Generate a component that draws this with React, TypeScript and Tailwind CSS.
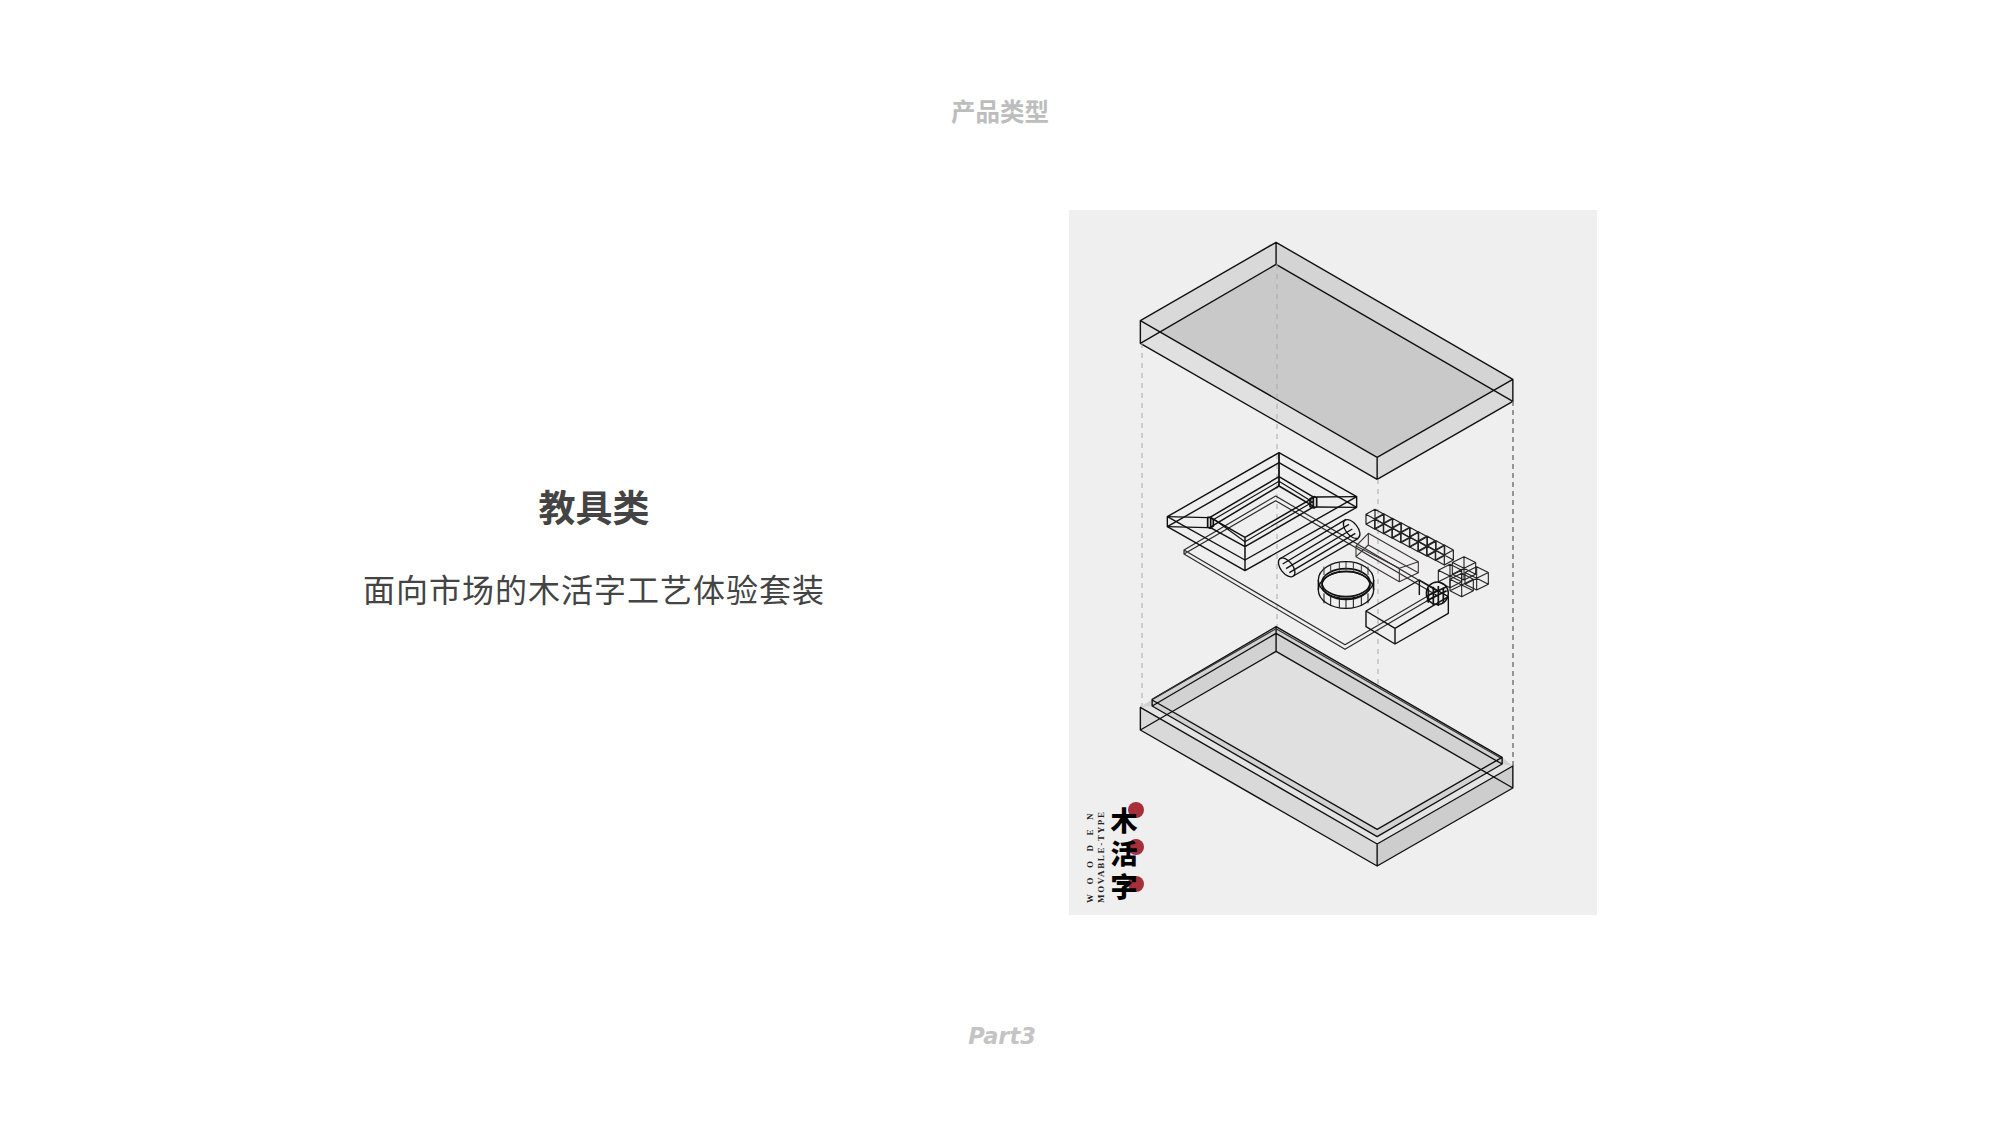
import React from 'react';

type Pt = [number, number];

const INK = '#111';

// open or closed wire line, stroke stays in screen pixels inside the scaled groups
const Wire = ({ d, w = 1.4, c = INK, dash }: { d: string; w?: number; c?: string; dash?: string }) => (
  <path d={d} fill="none" stroke={c} strokeWidth={w} strokeDasharray={dash} strokeLinejoin="round" vectorEffect="non-scaling-stroke" />
);

const Oval = ({ x, y, rx, ry, rot = 0, w = 1.3, c = INK }: { x: number; y: number; rx: number; ry: number; rot?: number; w?: number; c?: string }) => (
  <ellipse cx={x} cy={y} rx={rx} ry={ry} transform={`rotate(${rot} ${x} ${y})`} fill="none" stroke={c} strokeWidth={w} vectorEffect="non-scaling-stroke" />
);

// wire cube: hexagon outline with both the near and the far corner drawn
const Cube = ({ x, y, hw = 35, hh = 35, w = 1.1 }: { x: number; y: number; hw?: number; hh?: number; w?: number }) => {
  const q = hh / 2;
  return (
    <Wire
      w={w}
      c="#222"
      d={`M${x} ${y - hh} L${x + hw} ${y - q} L${x + hw} ${y + q} L${x} ${y + hh} L${x - hw} ${y + q} L${x - hw} ${y - q} Z
          M${x - hw} ${y - q} L${x} ${y} L${x + hw} ${y - q} M${x} ${y} L${x} ${y + hh}
          M${x - hw} ${y + q} L${x} ${y} L${x + hw} ${y + q} M${x} ${y} L${x} ${y - hh}`}
    />
  );
};

// row of little open cubes beside the tray, they overlap and form the dark zigzag
const CubeRow = () => {
  const cells = Array.from({ length: 9 }, (_, i) => i);
  return (
    <g>
      {cells.map((i) => (
        <Cube key={i} x={735 + i * 26} y={238 + i * 13.4} hw={27} hh={30} w={1.2} />
      ))}
    </g>
  );
};

const Ring = () => {
  const ticks: Pt[] = [
    [-66, 40], [-46, 48], [-20, 53], [0, 54], [22, 53], [46, 48], [66, 40],
  ];
  return (
    <g>
      <Oval x={648} y={420} rx={83} ry={55} w={1.3} />
      <Oval x={648} y={450} rx={83} ry={55} w={1.3} />
      <Oval x={648} y={428} rx={72} ry={42} w={1.6} />
      <Oval x={648} y={436} rx={72} ry={42} w={1.6} />
      <Wire d="M565 420 L565 450 M731 420 L731 450" />
      {ticks.map(([dx, dy], i) => (
        <Wire key={i} w={1} d={`M${648 + dx} ${420 + dy} L${648 + dx} ${450 + dy}`} />
      ))}
      {ticks.map(([dx, dy], i) => (
        <Wire key={i} w={1} d={`M${648 + dx} ${420 - dy} L${648 + dx} ${445 - dy}`} c="#333" />
      ))}
    </g>
  );
};

const Exploded = () => (
  <svg width={528} height={705} viewBox="0 0 528 705" className="block">
    {/* lid */}
    <g transform="translate(-9 -10) scale(0.35714 0.33333)">
      <path d="M605 127 L225 362 L225 430 L888 838 L1268 604 L1268 538 Z" fill="#e0e0e0" />
      <path d="M605 127 L1268 538 L1215 570 L605 193 Z" fill="#d4d4d4" />
      <path d="M605 127 L225 362 L280 397 L605 193 Z" fill="#d9d9d9" />
      <path d="M888 772 L888 838 L1268 604 L1268 538 Z" fill="#dadada" />
      <path d="M605 193 L280 397 L888 772 L1215 570 Z" fill="#c9c9c9" />
      <Wire d="M605 127 L225 362 L225 430 L888 838 L1268 604 L1268 538 Z M225 362 L888 772 L1268 538 M888 772 L888 838 M605 127 L605 193 M225 430 L605 193 L1268 604" />
    </g>

    {/* guide lines */}
    <Wire d="M73 133 L73 497" w={1} c="#aaa" dash="5 5" />
    <Wire d="M208 54 L208 417" w={1} c="#aaa" dash="5 5" />
    <Wire d="M309 269 L309 619" w={1} c="#aaa" dash="5 5" />
    <Wire d="M444 191 L444 556" w={1.3} c="#666" dash="5 4" />

    {/* tray with plate */}
    <g transform="translate(61 230) scale(0.33333)">
      <Wire d="M437 168 L162 330 L645 614 L920 452 Z M437 182 L162 342 L645 628 L920 466 Z M162 330 L162 342" w={1.2} c="#2a2a2a" />
      <Wire d="M447 38 L112 230 L112 260 L345 392 L680 202 L680 170 Z M112 230 L345 360 L680 170 M112 260 L447 68 L680 202 M345 360 L345 392" />
      <Wire d="M447 38 L447 138" w={1.8} />
      <Wire d="M447 110 L240 232 L345 292 L552 172 Z M240 262 L345 320 L552 200 L447 138 Z M345 292 L345 362" w={1.5} />
      <Wire d="M447 124 L252 238 L345 305 L548 186 Z" w={1.2} />
      <Wire d="M233 232 L233 262 L240 265 L250 258 L250 238 L240 232 Z M242 232 L242 264 M560 172 L560 200 L552 204 L540 200 L540 176 L552 170 Z M550 171 L550 203" w={1.7} />
      <Wire d="M112 230 L233 233 M112 260 L233 263 M560 171 L680 170 M560 201 L680 202" w={1.4} />

      {/* cylinder */}
      <Wire d="M449 357 L648 238 M490 408 L685 295 M458 372 L657 253 M468 386 L667 267 M478 398 L676 280" w={1.3} />
      <Oval x={470} y={382} rx={33} ry={18} rot={52} />
      <Oval x={665} y={267} rx={33} ry={18} rot={52} />
      <Ring />

      {/* prism */}
      <Wire d="M715 280 L865 365 L865 398 L808 425 L678 350 L678 318 Z M678 318 L808 385 L865 365 M808 385 L808 425 M715 280 L715 315 L865 398 M678 350 L715 315" w={1.1} c="#3c3636" />

      <CubeRow />
      <Cube x={960} y={408} />
      <Cube x={1002} y={385} />
      <Cube x={1040} y={415} />
      <Cube x={995} y={435} />

      {/* block with the round stamp */}
      <Wire d="M708 513 L868 420 L955 470 L795 565 Z M708 513 L708 560 L795 612 L955 520 L955 470 M795 565 L795 612 M868 420 L868 465" w={1.4} />
      <Oval x={922} y={460} rx={33} ry={34} w={1.4} />
      <Wire d="M895 445 L895 488 M910 440 L910 495 M925 438 L925 498 M940 442 L940 490 M890 468 L950 440 M890 482 L950 452" w={1.7} />
    </g>

    {/* base */}
    <g transform="translate(-9 410) scale(0.35714 0.33333)">
      <path d="M605 20 L258 238 L225 262 L225 330 L888 738 L1268 504 L1268 438 L1238 412 Z" fill="#d2d2d2" />
      <path d="M225 262 L258 258 L888 650 L1238 432 L1268 438 L888 672 Z" fill="#e4e4e4" />
      <path d="M888 672 L888 738 L1268 504 L1268 438 Z" fill="#cdcdcd" />
      <path d="M225 262 L225 330 L888 738 L888 672 Z" fill="#d9d9d9" />
      <path d="M605 94 L315 270 L888 628 L1185 450 Z" fill="#e0e0e0" />
      <Wire d="M225 262 L225 330 L888 738 L1268 504 L1268 438 L888 672 Z M888 672 L888 738 M225 330 L605 94 L1268 504" />
      <Wire d="M258 238 L605 20 L1238 412 L1238 432 L888 650 L258 258 Z M258 240 L888 628 L1238 412 M258 258 L605 40 L1238 432 M605 20 L605 94" />
      <Wire d="M262 236 L605 26 L1234 414" w={1.2} c="#333" />
    </g>
  </svg>
);

const Logo = () => (
  <div className="absolute left-[14px] bottom-[12px] flex h-[93px] items-stretch">
    <div className="w-[14px] text-center [writing-mode:vertical-rl] rotate-180 text-[9px] leading-[14px] font-bold tracking-[9.500px] text-[#222] font-['Liberation_Serif',serif]">
      WOODEN
    </div>
    <div className="ml-[-3px] w-[14px] text-center [writing-mode:vertical-rl] rotate-180 text-[9px] leading-[14px] font-bold tracking-[1.700px] text-[#222] font-['Liberation_Serif',serif]">
      MOVABLE-TYPE
    </div>
    <div className="relative ml-[1px] mt-[-7px] flex h-[99px] w-[30px] flex-col items-center text-[27px] leading-[33px] font-black text-black font-['Noto_Sans_CJK_SC',sans-serif]">
      <span className="absolute left-[19px] top-[-1px] h-[16px] w-[16px] rounded-full bg-[#a5303a]" />
      <span className="absolute left-[19px] top-[36px] h-[16px] w-[16px] rounded-full bg-[#a5303a]" />
      <span className="absolute left-[19px] top-[73px] h-[16px] w-[16px] rounded-full bg-[#a5303a]" />
      <span className="relative h-[33px]">木</span>
      <span className="relative h-[33px]">活</span>
      <span className="relative h-[33px]">字</span>
    </div>
  </div>
);

export default function App() {
  return (
    <div className="flex h-[1125px] w-[2000px] flex-col items-center overflow-hidden bg-white">
      <div className="mt-[97px] h-[32px] text-[24.500px] leading-[32px] font-bold text-[#bdbdbd] font-['Liberation_Serif','Noto_Sans_CJK_SC',sans-serif]">
        产品类型
      </div>

      <div className="mt-[81px] flex h-[705px] w-full">
        <div className="flex w-[1069px] flex-col items-center pl-[119px] pt-[278px] text-[#444] font-['Liberation_Serif','Noto_Sans_CJK_SC',serif]">
          <div className="text-[37px] leading-[44px] font-bold">教具类</div>
          <div className="mt-[37px] text-[32px] leading-[44px] tracking-[1px] font-normal">面向市场的木活字工艺体验套装</div>
        </div>
        <div className="relative h-[705px] w-[528px] bg-[#efefef]">
          <Exploded />
          <Logo />
        </div>
      </div>

      <div className="mt-[105px] h-[32px] pl-[4px] text-[22.500px] leading-[32px] font-bold italic text-[#c4c4c4] font-['DejaVu_Sans',sans-serif]">
        Part3
      </div>
    </div>
  );
}
